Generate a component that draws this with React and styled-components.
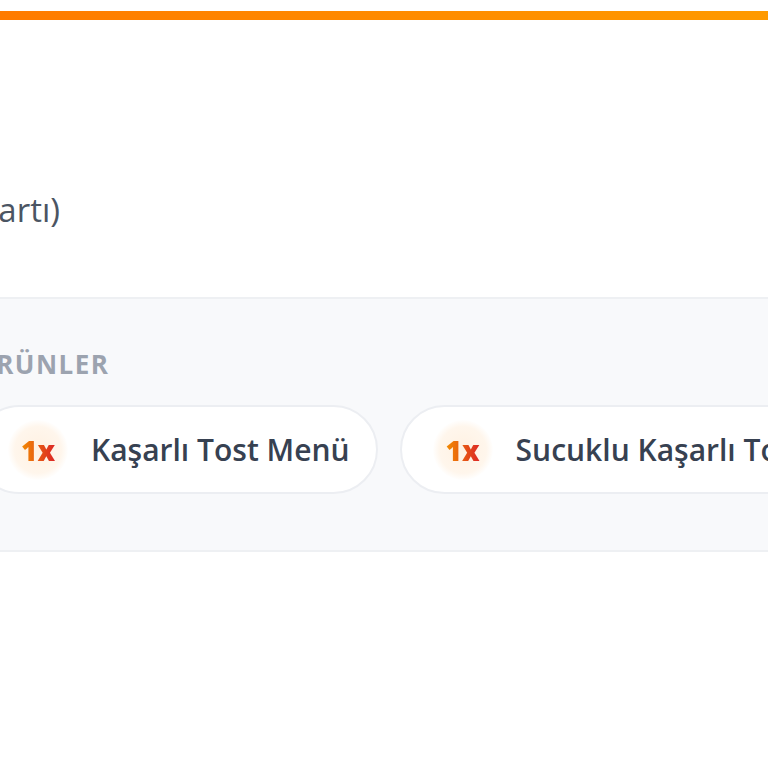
import React from 'react';
import styled, { createGlobalStyle } from 'styled-components';

const GlobalStyle = createGlobalStyle`
  html, body {
    margin: 0;
    padding: 0;
    background: #ffffff;
    overflow: hidden;
  }
  body {
    font-family: "Open Sans", "Noto Sans", "Liberation Sans", sans-serif;
  }
`;

const Page = styled.div`
  width: 768px;
  min-height: 768px;
  overflow: hidden;
  background: #ffffff;
`;

const AccentBar = styled.div`
  margin-top: 11px;
  height: 9px;
  background: linear-gradient(90deg, #ff7b00, #ff9a00);
`;

const Card = styled.div`
  width: 1100px;
  margin-left: -55px;
  padding-top: 170px;
`;

// value column is right aligned; only its tail is inside the view
const PaymentLine = styled.div`
  width: 900px;
  margin-left: -785px;
  text-align: right;
  font-size: 33px;
  line-height: 40px;
  color: #4b5563;
  white-space: nowrap;
`;

const ItemsPanel = styled.section`
  margin-top: 67px;
  background: #f8f9fb;
  border: 2px solid #eef0f3;
  padding: 52px 0 56px 28px;
`;

const PanelLabel = styled.div`
  font-size: 26px;
  line-height: 26px;
  font-weight: 700;
  letter-spacing: 1.5px;
  color: #9ca3af;
  text-transform: uppercase;
`;

const ChipRow = styled.div`
  display: flex;
  gap: 22px;
  margin-top: 28px;
`;

const Chip = styled.div`
  flex-shrink: 0;
  display: flex;
  align-items: center;
  gap: 23px;
  height: 89px;
  box-sizing: border-box;
  padding: 0 26px 0 31px;
  background: #ffffff;
  border: 2px solid #eceef2;
  border-radius: 999px;
  white-space: nowrap;
`;

const QtyBadge = styled.div`
  width: 60px;
  height: 60px;
  border-radius: 50%;
  display: flex;
  align-items: center;
  justify-content: center;
  background: radial-gradient(circle, #fff1e2 0%, #fff6ec 55%, rgba(255, 247, 237, 0) 72%);
`;

const QtyText = styled.span`
  font-size: 28px;
  font-weight: 800;
  background: linear-gradient(90deg, #f28c00, #dc2626);
  -webkit-background-clip: text;
  background-clip: text;
  color: transparent;
`;

const ItemName = styled.span`
  font-size: 30px;
  font-weight: 600;
  color: #374151;
`;

const items = [
  { qty: 1, name: 'Kaşarlı Tost Menü' },
  { qty: 1, name: 'Sucuklu Kaşarlı Tost Menü' },
];

const App = () => (
  <Page>
    <GlobalStyle />
    <AccentBar />
    <Card>
      <PaymentLine>Ödeme Yöntemi: Kapıda Ödeme (Kredi Kartı)</PaymentLine>
      <ItemsPanel>
        <PanelLabel>Ürünler</PanelLabel>
        <ChipRow>
          {items.map((item) => (
            <Chip key={item.name}>
              <QtyBadge>
                <QtyText>{item.qty}x</QtyText>
              </QtyBadge>
              <ItemName>{item.name}</ItemName>
            </Chip>
          ))}
        </ChipRow>
      </ItemsPanel>
    </Card>
  </Page>
);

export default App;
